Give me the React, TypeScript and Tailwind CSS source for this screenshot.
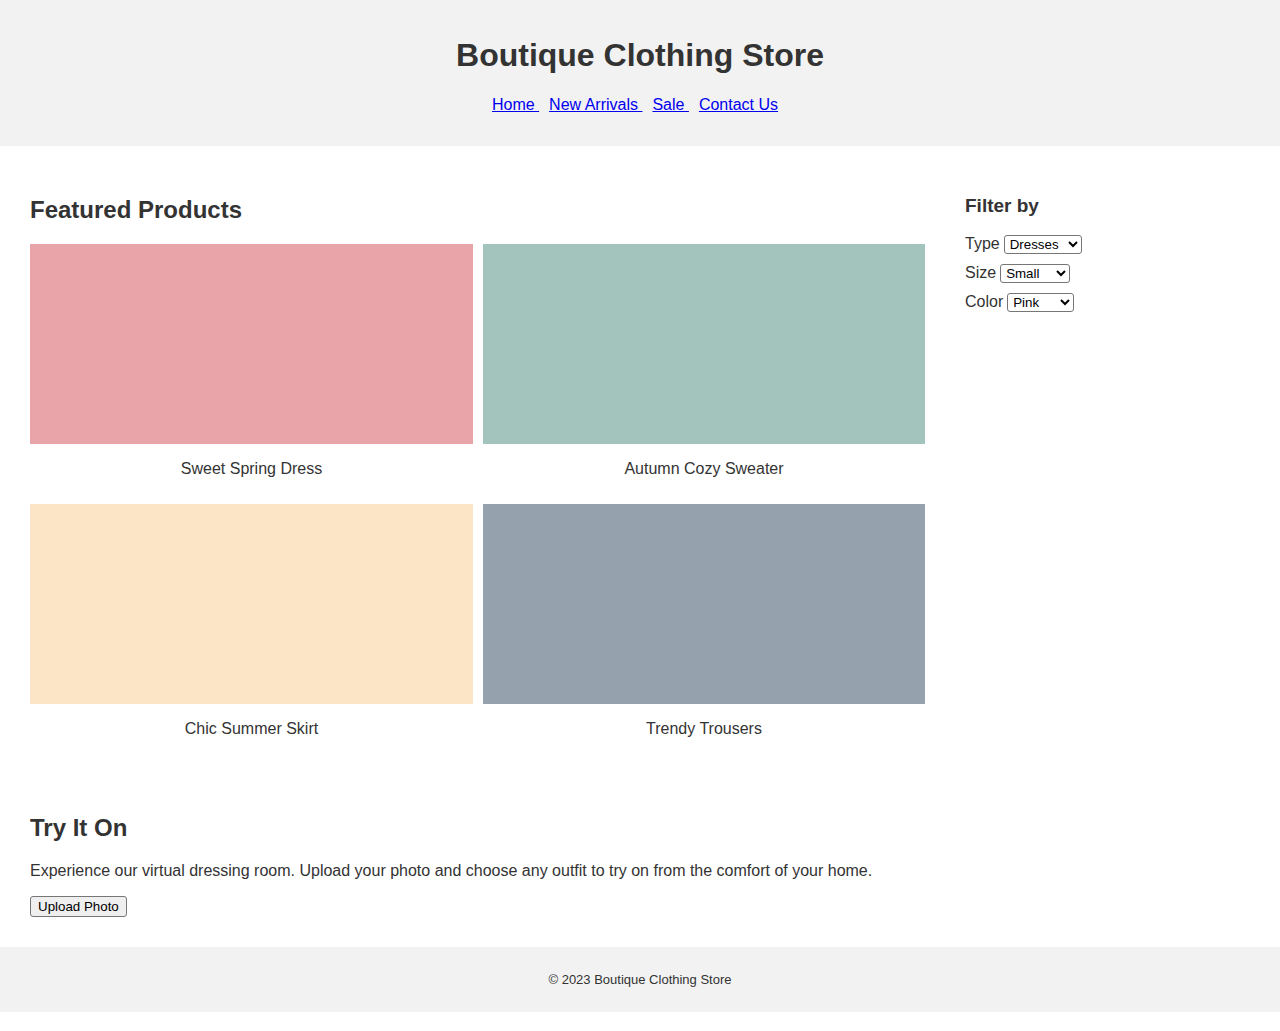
import React from "react";

const products = [
  { name: "Sweet Spring Dress", color: "bg-[#e8a4a8]" },
  { name: "Autumn Cozy Sweater", color: "bg-[#a3c4bc]" },
  { name: "Chic Summer Skirt", color: "bg-[#fce5c6]" },
  { name: "Trendy Trousers", color: "bg-[#95a2ad]" },
];

function Filter({ label, value, options, w }: { label: string; value: string; options: string[]; w: string }) {
  return (
    <div className="h-[29px] flex items-start">
      <label className="text-[16px] leading-[18px] mr-[4px]">{label}</label>
      <select
        defaultValue={value}
        className={`${w} h-[19px] text-[13.33px] leading-[15px] text-black bg-white border border-[#767676] rounded-[3px] px-[1px] font-['Liberation_Sans',Arial,sans-serif]`}
      >
        {options.map((o) => (
          <option key={o}>{o}</option>
        ))}
      </select>
    </div>
  );
}

export default function App() {
  return (
    <div className="font-['Liberation_Sans',Arial,sans-serif] text-[#333] bg-white">
      <header className="bg-[#f2f2f2] text-center pt-[37px] pb-[32px]">
        <h1 className="text-[32px] leading-[37px] font-bold mb-[22px]">Boutique Clothing Store</h1>
        <nav className="text-[16px] leading-[18px]">
          <a href="#" className="text-[#0000ee] underline mr-[10px] whitespace-pre">{"Home "}</a>
          <a href="#" className="text-[#0000ee] underline mr-[10px] whitespace-pre">{"New Arrivals "}</a>
          <a href="#" className="text-[#0000ee] underline mr-[10px] whitespace-pre">{"Sale "}</a>
          <a href="#" className="text-[#0000ee] underline mr-[10px] whitespace-pre">{"Contact Us"}</a>
        </nav>
      </header>

      <main className="p-[30px] flex gap-[40px]">
        <div className="w-[895px]">
          <section className="mb-[60px]">
            <h2 className="text-[24px] leading-[28px] font-bold mt-[20px] mb-[20px]">Featured Products</h2>
            <div className="grid grid-cols-[443px_442px] gap-[10px]">
              {products.map((p) => (
                <div key={p.name} className="h-[250px]">
                  <div className={`h-[200px] ${p.color}`} />
                  <p className="text-center text-[16px] leading-[18px] mt-[16px]">{p.name}</p>
                </div>
              ))}
            </div>
          </section>
          <section>
            <h2 className="text-[24px] leading-[28px] font-bold mb-[20px]">Try It On</h2>
            <p className="text-[16px] leading-[18px] mb-[16px]">
              Experience our virtual dressing room. Upload your photo and choose any outfit to try on from the comfort of your home.
            </p>
            <button className="text-[13.33px] leading-[15px] text-black bg-[#efefef] border border-[#767676] rounded-[3px] px-[7px] py-[2px] block">
              Upload Photo
            </button>
          </section>
        </div>
        <aside className="w-[285px]">
          <h3 className="text-[19px] leading-[22px] font-bold mt-[19px] mb-[18px]">Filter by</h3>
          <Filter label="Type" value="Dresses" options={["Dresses", "Tops", "Skirts", "Pants"]} w="w-[78px]" />
          <Filter label="Size" value="Small" options={["Small", "Medium", "Large"]} w="w-[70px]" />
          <Filter label="Color" value="Pink" options={["Pink", "Blue", "Yellow", "Gray"]} w="w-[67px]" />
        </aside>
      </main>

      <footer className="bg-[#f2f2f2] text-center h-[65px] flex items-center justify-center text-[13px]">
        <p>© 2023 Boutique Clothing Store</p>
      </footer>
    </div>
  );
}
